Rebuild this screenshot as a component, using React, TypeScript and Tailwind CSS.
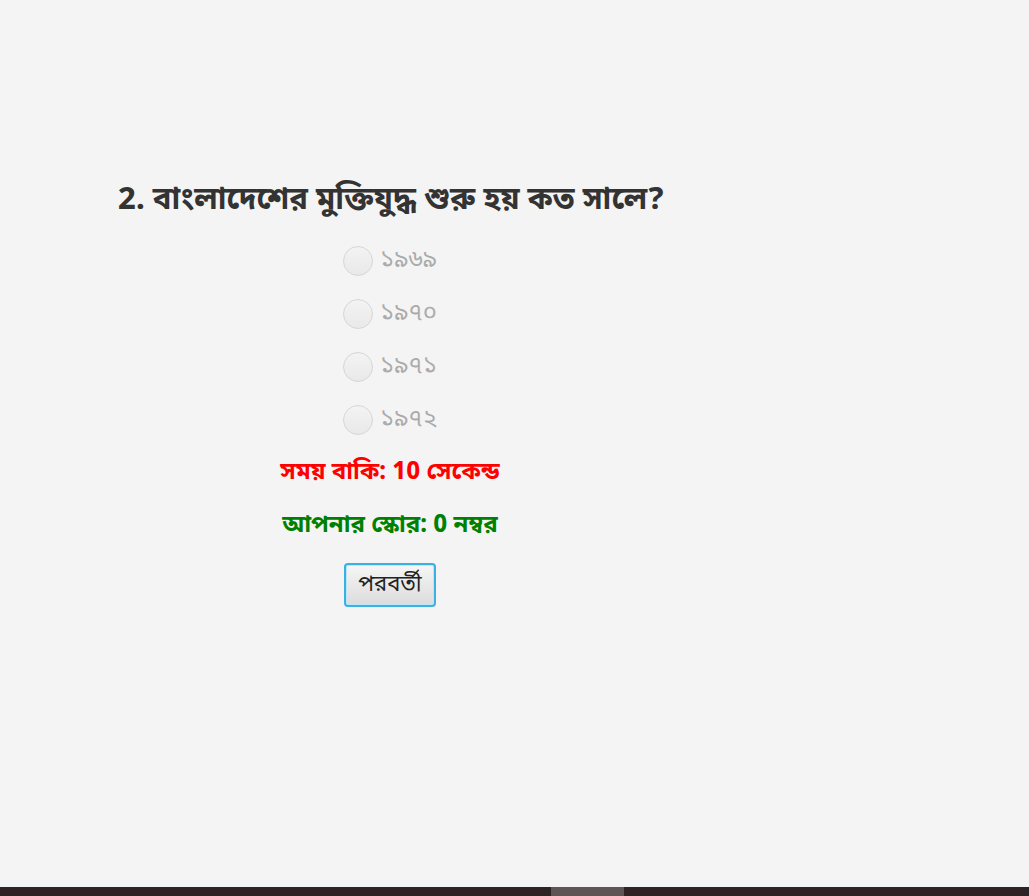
import React from "react"

const options = ["১৯৬৯", "১৯৭০", "১৯৭১", "১৯৭২"]

const font = { fontFamily: '"Noto Sans Bengali", "Noto Sans", "Liberation Sans", sans-serif' }

function Radio({ label }: { label: string }) {
  return (
    <div className="flex h-[53px] items-center gap-[7px]">
      <div className="h-[30px] w-[30px] rounded-full border border-[#d6d6d6] bg-gradient-to-b from-[#f3f3f3] to-[#e9e9e9]" />
      <span className="text-[24px] leading-none text-[#ababab]">{label}</span>
    </div>
  )
}

export default function App() {
  return (
    <div className="flex h-[896px] flex-col bg-[#f4f4f4]" style={font}>
      <main className="flex-1 pt-[181px]">
        <h1 className="pl-[118px] text-[31px] font-bold leading-[42px] text-[#333333]">
          2. বাংলাদেশের মুক্তিযুদ্ধ শুরু হয় কত সালে?
        </h1>
        <div className="mt-[11px] flex w-[780px] flex-col items-center">
          {options.map((o) => (
            <Radio key={o} label={o} />
          ))}
          <p className="flex h-[53px] items-center text-[24px] font-bold text-[#ff0000]">
            সময় বাকি: 10 সেকেন্ড
          </p>
          <p className="flex h-[53px] items-center text-[24px] font-bold text-[#008000]">
            আপনার স্কোর: 0 নম্বর
          </p>
          <button className="mt-[11px] flex h-[44px] w-[92px] items-center justify-center rounded-[4px] border-2 border-[#3bb0e3] bg-gradient-to-b from-[#f6f6f6] to-[#dcdcdc] text-[22px] text-[#222222] shadow-[inset_0_0_0_1px_#bfe6f7]">
            পরবর্তী
          </button>
        </div>
      </main>
      <div className="flex h-[9px] bg-[#2f2326]">
        <div className="w-[551px]" />
        <div className="w-[73px] bg-[#5f5557]" />
      </div>
    </div>
  )
}
